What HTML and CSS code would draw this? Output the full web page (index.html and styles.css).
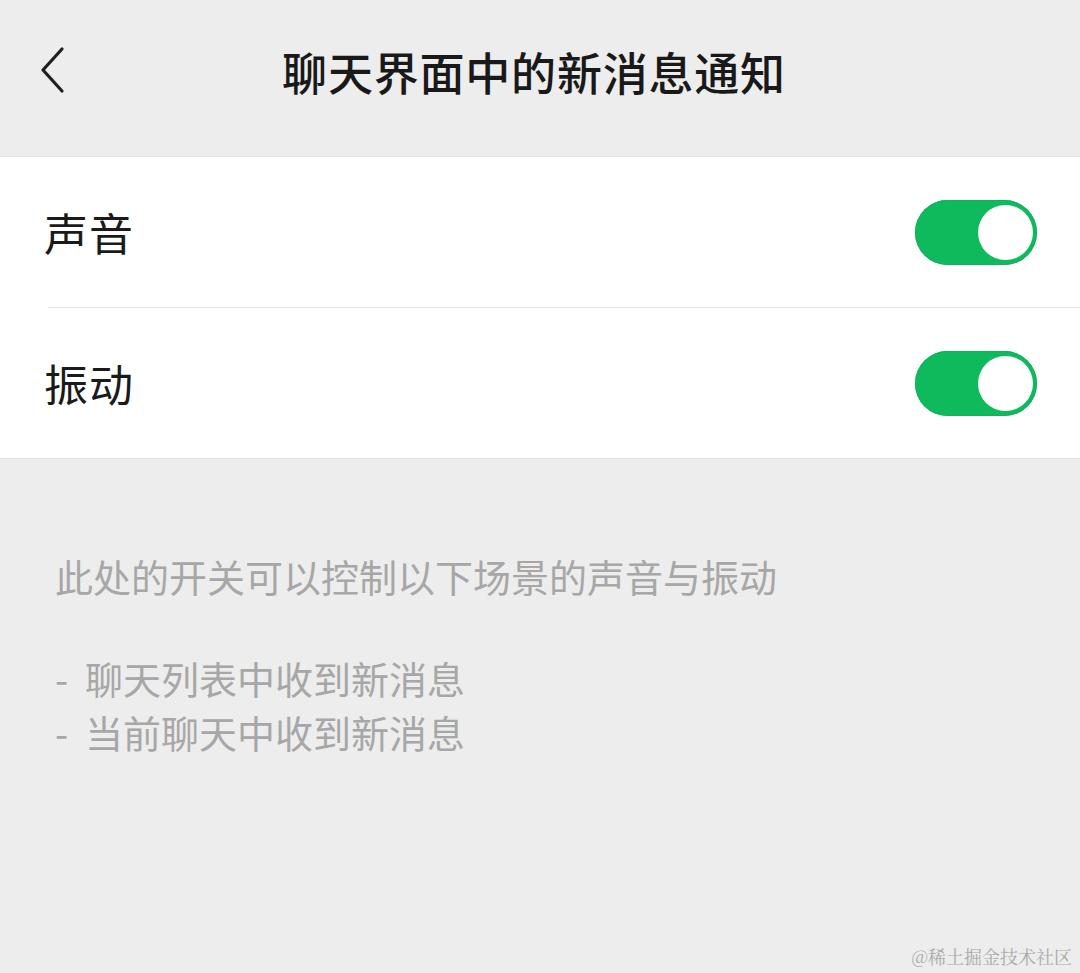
FILE: index.html
```html
<!DOCTYPE html>
<html lang="zh-CN">
<head>
<meta charset="utf-8">
<title>聊天界面中的新消息通知</title>
<link rel="stylesheet" href="styles.css">
</head>
<body>
<div class="page">
  <header class="nav">
    <div class="back">
      <svg width="30" height="48" viewBox="0 0 30 48"><path d="M24 3 L5 24 L24 45" fill="none" stroke="#1f1f1f" stroke-width="3.2" stroke-linecap="round" stroke-linejoin="round"/></svg>
    </div>
    <h1 class="title">聊天界面中的新消息通知</h1>
  </header>
  <section class="list">
    <div class="row">
      <span class="label">声音</span>
      <span class="switch"><span class="knob"></span></span>
    </div>
    <div class="divider"></div>
    <div class="row">
      <span class="label">振动</span>
      <span class="switch"><span class="knob"></span></span>
    </div>
  </section>
  <section class="tips">
    <p class="tip">此处的开关可以控制以下场景的声音与振动</p>
    <p class="tip gap"><span class="dash">-</span>聊天列表中收到新消息</p>
    <p class="tip"><span class="dash">-</span>当前聊天中收到新消息</p>
  </section>
  <div class="watermark">@稀土掘金技术社区</div>
</div>
</body>
</html>
```
FILE: styles.css
```css
* { box-sizing: border-box; }
html, body { margin: 0; padding: 0; }
body {
  background: #ededed;
  font-family: "Noto Sans CJK SC", "Noto Sans", sans-serif;
  width: 1080px;
  height: 973px;
  overflow: hidden;
}
.page {
  position: relative;
  width: 1080px;
  height: 973px;
  background: #ededed;
}
.nav {
  position: relative;
  height: 157px;
  display: flex;
  align-items: center;
  justify-content: center;
  border-bottom: 1px solid #e6e6e6;
}
.back {
  position: absolute;
  left: 38px;
  top: 46px;
  width: 30px;
  height: 48px;
}
.back svg { display: block; }
.title {
  margin: 0;
  margin-top: -14px;
  margin-left: -12px;
  font-size: 45px;
  font-weight: 500;
  color: #191919;
  letter-spacing: 0.8px;
}
.list {
  background: #ffffff;
  border-bottom: 1px solid #e3e3e3;
}
.row {
  height: 150px;
  display: flex;
  align-items: center;
  justify-content: space-between;
  padding: 0 43px 0 44px;
}
.label {
  font-size: 44px;
  color: #1a1a1a;
  font-weight: 400;
  letter-spacing: 1px;
}
.switch {
  position: relative;
  width: 122px;
  height: 65px;
  border-radius: 33px;
  background: #0fba5c;
  box-shadow: inset 0 0 0 1px #13b060;
  display: flex;
  align-items: center;
  justify-content: flex-end;
  padding-right: 4px;
}
.knob {
  width: 55px;
  height: 55px;
  border-radius: 50%;
  background: #ffffff;
}
.divider {
  height: 1px;
  margin-left: 48px;
  background: #e5e5e5;
}
.tips {
  padding: 90px 0 0 55px;
}
.tip {
  margin: 0;
  font-size: 38px;
  line-height: 54px;
  color: #a7a7a7;
}
.tip.gap { margin-top: 48px; }
.dash {
  display: inline-block;
  width: 30px;
}
.watermark {
  position: absolute;
  right: 8px;
  bottom: 4px;
  font-family: "Noto Serif CJK SC", "Noto Sans CJK SC", serif;
  font-size: 18px;
  color: #a9a9a9;
}
```
